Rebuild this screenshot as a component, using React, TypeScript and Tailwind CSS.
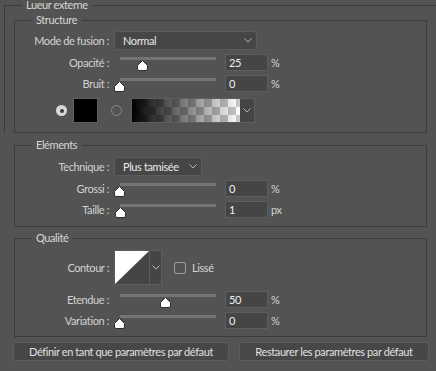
import React from "react";

const font = { fontFamily: 'Lato, "Noto Sans", sans-serif' };

const Label = ({ children }: { children: React.ReactNode }) => (
  <div className="w-[94px] shrink-0 text-right text-[#d2d2d2] whitespace-nowrap">{children}</div>
);

const Chevron = () => (
  <svg width="8" height="5" viewBox="0 0 8 5" className="shrink-0">
    <path d="M0.5 0.5 L4 4 L7.5 0.5" fill="none" stroke="#b4b4b4" strokeWidth="1" />
  </svg>
);

const Select = ({ value, width }: { value: string; width: string }) => (
  <div
    className={`ml-[5px] h-[19px] ${width} flex items-center justify-between pl-[8px] pr-[4px] bg-[#464646] border border-[#5c5c5c] rounded-[3px] text-[#e8e8e8] whitespace-nowrap`}
  >
    <span>{value}</span>
    <Chevron />
  </div>
);

const Thumb = ({ value }: { value: number }) => (
  <svg
    width="11"
    height="11"
    viewBox="0 0 11 11"
    className="absolute top-[6px]"
    style={{ left: Math.round((value / 100) * 92) - 6 }}
  >
    <path
      d="M5.5 0.5 L10.5 5.5 V9 Q10.5 10.5 9 10.5 H2 Q0.5 10.5 0.5 9 V5.5 Z"
      fill="#ffffff"
      stroke="#2e2e2e"
      strokeWidth="1"
    />
  </svg>
);

const SliderRow = ({
  label,
  value,
  unit,
  className = "",
}: {
  label: string;
  value: number;
  unit: string;
  className?: string;
}) => (
  <div className={`flex items-center h-[17px] ${className}`}>
    <Label>{label}</Label>
    <div className="ml-[11px] relative w-[96px] h-[17px] shrink-0">
      <div className="absolute top-[3px] left-0 w-[96px] h-[3px] bg-[#747474]" />
      <Thumb value={value} />
    </div>
    <div className="ml-[9px] w-[43px] h-[17px] bg-[#454545] border border-[#5e5e5e] pl-[3px] flex items-center text-[#f0f0f0]">
      {value}
    </div>
    <span className="ml-[3px] text-[#d2d2d2]">{unit}</span>
  </div>
);

const Group = ({
  title,
  className = "",
  children,
}: {
  title: string;
  className?: string;
  children: React.ReactNode;
}) => (
  <fieldset className={`w-[413px] border border-[#3c3c3c] ${className}`}>
    <legend className="ml-[16px] px-[5px] leading-[14px] text-[#d6d6d6]">{title}</legend>
    {children}
  </fieldset>
);

export default function App() {
  return (
    <div
      className="w-[436px] h-[371px] overflow-hidden bg-[#535353] text-[11px] leading-[14px] tracking-[-0.4px]"
      style={font}
    >
      <fieldset className="-mt-[1px] ml-[4px] w-[440px] border-t border-l border-[#3c3c3c]">
        <legend className="ml-[17px] px-[4px] leading-[12px] text-[#d6d6d6]">Lueur externe</legend>
        <div className="ml-[9px] mt-[2px]">
          <Group title="Structure" className="pb-[9px]">
            <div className="flex items-center mt-[4px]">
              <Label>Mode de fusion :</Label>
              <Select value="Normal" width="w-[143px]" />
            </div>
            <SliderRow label="Opacité :" value={25} unit="%" className="mt-[4px]" />
            <SliderRow label="Bruit :" value={0} unit="%" className="mt-[4px]" />
            <div className="flex items-center mt-[6px] h-[25px]">
              <div className="ml-[41px] w-[11px] h-[11px] rounded-full bg-[#d9d9d9] flex items-center justify-center">
                <div className="w-[4px] h-[4px] rounded-full bg-[#3a3a3a]" />
              </div>
              <div className="ml-[6px] w-[25px] h-[25px] bg-black border border-[#5e5e5e]" />
              <div className="ml-[13px] w-[11px] h-[11px] rounded-full border border-[#8a8a8a]" />
              <div className="ml-[9px] flex h-[25px] border border-[#5e5e5e]">
                <div className="w-[108px] h-full bg-[repeating-conic-gradient(#c8c8c8_0_25%,#ffffff_0_50%)] bg-[length:16px_16px]">
                  <div className="w-full h-full bg-gradient-to-r from-black to-transparent" />
                </div>
                <div className="w-[14px] h-full bg-[#454545] flex items-center justify-center">
                  <Chevron />
                </div>
              </div>
            </div>
          </Group>
        </div>
      </fieldset>

      <div className="ml-[14px]">
        <Group title="Eléments" className="mt-[5px] pb-[8px]">
          <div className="flex items-center mt-[5px]">
            <Label>Technique :</Label>
            <Select value="Plus tamisée" width="w-[88px]" />
          </div>
          <SliderRow label="Grossi :" value={0} unit="%" className="mt-[4px]" />
          <SliderRow label="Taille :" value={1} unit="px" className="mt-[4px]" />
        </Group>

        <Group title="Qualité" className="mt-[4px] pb-[7px]">
          <div className="flex items-center mt-[5px]">
            <Label>Contour :</Label>
            <div className="ml-[5px] flex h-[35px] border border-[#5e5e5e]">
              <svg width="34" height="33" viewBox="0 0 34 33" className="block">
                <rect width="34" height="33" fill="#454545" />
                <polygon points="0,0 34,0 0,33" fill="#ffffff" />
              </svg>
              <div className="w-[12px] h-full bg-[#454545] border-l border-[#5e5e5e] flex items-center justify-center">
                <Chevron />
              </div>
            </div>
            <div className="ml-[12px] w-[12px] h-[12px] rounded-[2px] border border-[#9a9a9a]" />
            <span className="ml-[6px] text-[#d6d6d6]">Lissé</span>
          </div>
          <SliderRow label="Etendue :" value={50} unit="%" className="mt-[6px]" />
          <SliderRow label="Variation :" value={0} unit="%" className="mt-[4px]" />
        </Group>
      </div>

      <div className="flex mt-[5px] ml-[13px] gap-[10px]">
        <button className="w-[216px] h-[19px] bg-[#474747] border border-[#5e5e5e] rounded-[3px] text-[#e0e0e0] leading-[14px] whitespace-nowrap">
          Définir en tant que paramètres par défaut
        </button>
        <button className="w-[190px] h-[19px] bg-[#474747] border border-[#5e5e5e] rounded-[3px] text-[#e0e0e0] leading-[14px] whitespace-nowrap">
          Restaurer les paramètres par défaut
        </button>
      </div>
    </div>
  );
}
